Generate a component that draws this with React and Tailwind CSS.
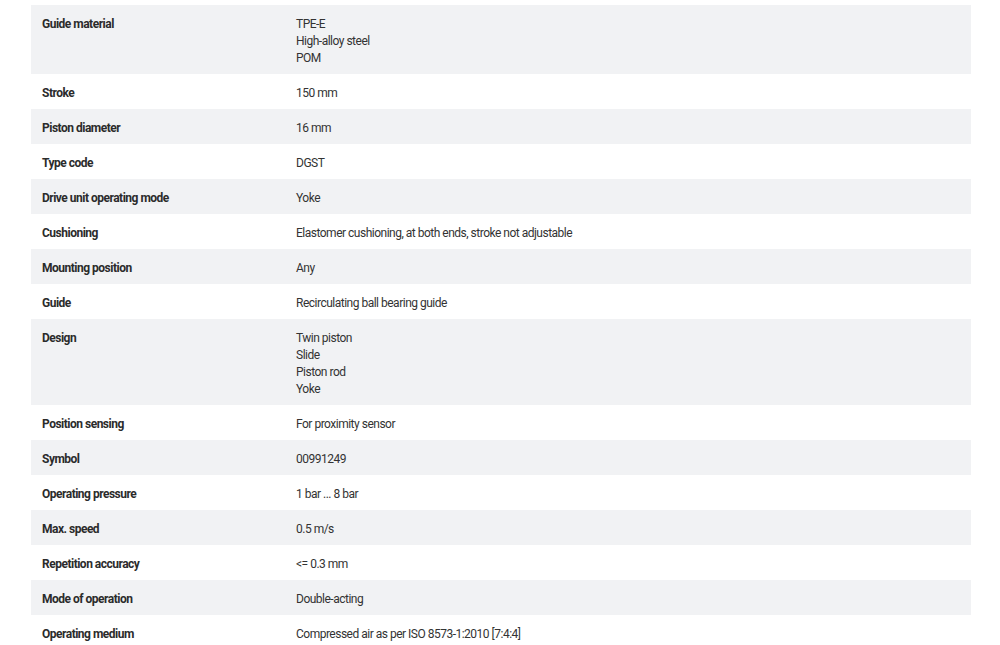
const rows = [
  ["Guide material", ["TPE-E", "High-alloy steel", "POM"]],
  ["Stroke", ["150 mm"]],
  ["Piston diameter", ["16 mm"]],
  ["Type code", ["DGST"]],
  ["Drive unit operating mode", ["Yoke"]],
  ["Cushioning", ["Elastomer cushioning, at both ends, stroke not adjustable"]],
  ["Mounting position", ["Any"]],
  ["Guide", ["Recirculating ball bearing guide"]],
  ["Design", ["Twin piston", "Slide", "Piston rod", "Yoke"]],
  ["Position sensing", ["For proximity sensor"]],
  ["Symbol", ["00991249"]],
  ["Operating pressure", ["1 bar ... 8 bar"]],
  ["Max. speed", ["0.5 m/s"]],
  ["Repetition accuracy", ["<= 0.3 mm"]],
  ["Mode of operation", ["Double-acting"]],
  ["Operating medium", ["Compressed air as per ISO 8573-1:2010 [7:4:4]"]],
];

export default function App() {
  return (
    <div className="w-[1000px] h-[645px] overflow-hidden bg-white pt-[5px] pl-[31px] pr-[29px] text-[12px] leading-[17px] tracking-[-0.5px] text-[#333] font-['Roboto',sans-serif]">
      <div className="flex flex-col">
        {rows.map(([label, vals], i) => (
          <div
            key={label}
            className={`grid grid-cols-[254px_1fr] pt-[11px] pb-[7px] ${i % 2 === 0 ? "bg-[#f1f2f4]" : "bg-white"}`}
          >
            <div className="pl-[11px] font-bold text-[#2b2b2b]">{label}</div>
            <div className="pl-[11px]">
              {vals.map((v) => (
                <div key={v}>{v}</div>
              ))}
            </div>
          </div>
        ))}
      </div>
    </div>
  );
}
